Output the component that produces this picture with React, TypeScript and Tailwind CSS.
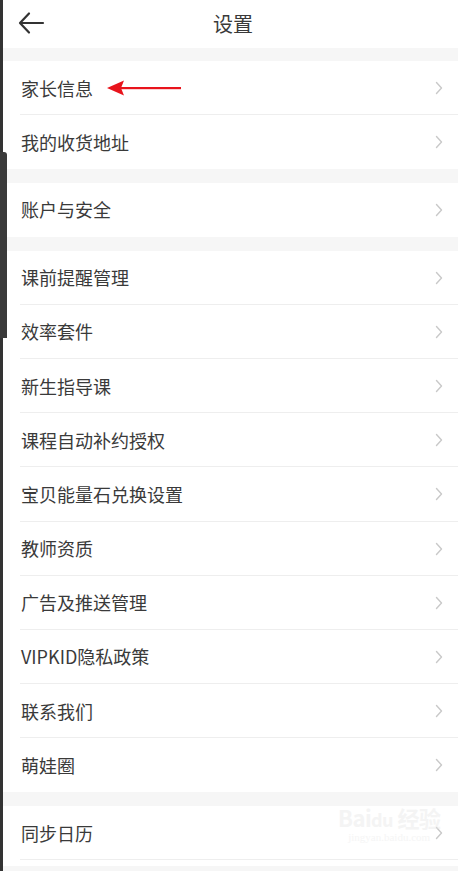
import React from "react";

type Section = string[];

const sections: Section[] = [
  ["家长信息", "我的收货地址"],
  ["账户与安全"],
  [
    "课前提醒管理",
    "效率套件",
    "新生指导课",
    "课程自动补约授权",
    "宝贝能量石兑换设置",
    "教师资质",
    "广告及推送管理",
    "VIPKID隐私政策",
    "联系我们",
    "萌娃圈",
  ],
  ["同步日历"],
];

function Chevron() {
  return (
    <svg width="8" height="14" viewBox="0 0 8 14" fill="none" className="shrink-0">
      <path d="M1.5 1.5 L6.5 7 L1.5 12.5" stroke="#c9c9c9" strokeWidth="1.4" strokeLinecap="round" strokeLinejoin="round" />
    </svg>
  );
}

function RedArrow() {
  return (
    <svg width="76" height="16" viewBox="0 0 76 16" className="ml-[14px]">
      <path d="M0 8 L17 0.5 L14 8 L17 15.5 Z" fill="#e8141c" />
      <rect x="14" y="7" width="60" height="2.2" fill="#e8141c" />
    </svg>
  );
}

function Row({ label, last }: { label: string; last: boolean }) {
  return (
    <div className="relative flex h-[54.2px] items-center bg-white pl-[21px] pr-[15px]">
      <span className="text-[18px] text-[#3a3a3a]">{label}</span>
      {label === "家长信息" ? <RedArrow /> : null}
      <div className="flex-1" />
      <Chevron />
      {!last || label === "同步日历" ? (
        <div className="absolute bottom-0 left-[20px] right-0 h-px bg-[#eeeeee]" />
      ) : null}
    </div>
  );
}

export default function App() {
  return (
    <div
      className="relative h-[871px] w-[458px] overflow-hidden bg-[#f6f6f6]"
      style={{ fontFamily: '"Noto Sans CJK SC", "Noto Sans", sans-serif' }}
    >
      <header className="relative flex h-[48px] items-center justify-center bg-white pl-[8px]">
        <svg width="28" height="24" viewBox="0 0 28 24" fill="none" className="absolute left-[18px] top-[11px]">
          <path d="M25 12 H3 M11 2.5 L2 12 L11 21.5" stroke="#333333" strokeWidth="2.2" strokeLinecap="round" strokeLinejoin="round" />
        </svg>
        <h1 className="text-[20px] text-[#3a3a3a]">设置</h1>
      </header>

      <div className="flex flex-col gap-[13.5px] pt-[13px]">
        {sections.map((rows, i) => (
          <div key={i} className="flex flex-col bg-white">
            {rows.map((label, j) => (
              <Row key={label} label={label} last={j === rows.length - 1} />
            ))}
            {i === sections.length - 1 ? <div className="h-[6px] bg-white" /> : null}
          </div>
        ))}
      </div>

      {/* baidu watermark */}
      <div className="pointer-events-none absolute left-[338px] top-[806px] flex flex-col items-center leading-none opacity-40">
        <span className="text-[22px] font-bold tracking-tight text-[#e4e4e4]">Bai<span className="text-[18px]">du</span> 经验</span>
        <span className="mt-[4px] text-[11px] text-[#e8e8e8]" style={{ fontFamily: '"Liberation Serif", serif' }}>jingyan.baidu.com</span>
      </div>

      {/* left screen edge */}
      <div className="absolute left-0 top-0 h-full w-[3px] bg-[#333333]" />
      <div className="absolute left-0 top-[152px] h-[186px] w-[7px] rounded-tr-[3px] bg-[#3a3a3a]" />
    </div>
  );
}
